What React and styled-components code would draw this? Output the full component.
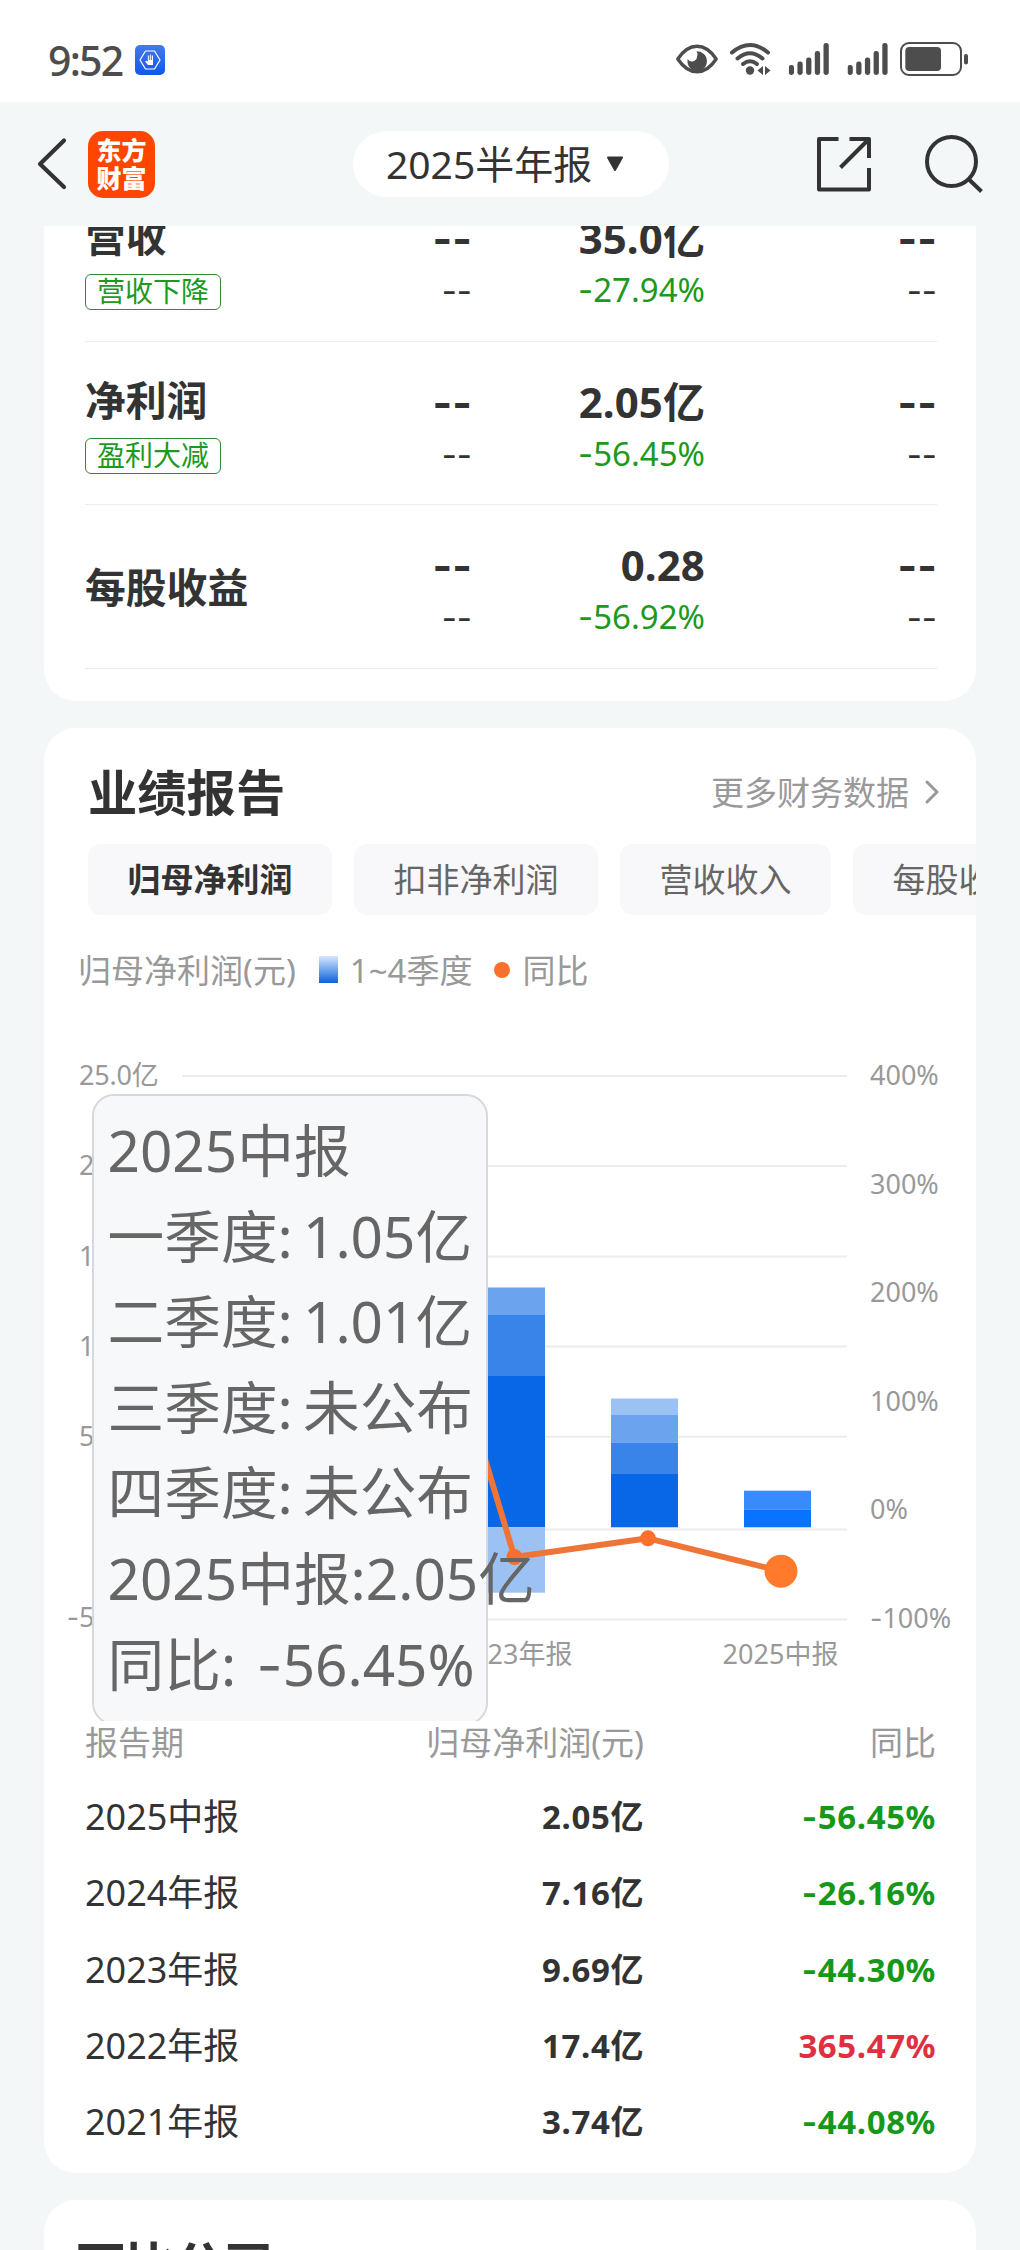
import React from 'react'
import styled, { createGlobalStyle } from 'styled-components'

const GlobalStyle = createGlobalStyle`
    * {
        box-sizing: border-box;
    }
    body {
        margin: 0;
        background: #f3f7f8;
        color: #333;
        font-family: "Noto Sans", "Noto Sans CJK SC", sans-serif;
    }
`
const Screen = styled.div`
    width: 1020px;
    height: 2250px;
    display: flex;
    flex-direction: column;
    overflow: hidden;
    background: #f3f7f8;
`
const StatusBar = styled.div`
    flex: none;
    height: 102px;
    padding: 18px 51px 0 48px;
    display: flex;
    align-items: center;
    justify-content: space-between;
    background: #fff;
`
const StatusLeft = styled.div`
    display: flex;
    align-items: center;
    gap: 12px;
`
const Clock = styled.span`
    width: 75px;
    font-size: 41px;
    line-height: 40px;
    font-weight: 500;
    letter-spacing: -1.8px;
    color: #4d4d4d;
`
const Header = styled.header`
    flex: none;
    height: 124px;
    padding: 0 36px 0 37px;
    display: grid;
    grid-template-columns: 316px 316px 1fr;
    align-items: center;
`
const HeaderLeft = styled.div`
    display: flex;
    align-items: center;
    gap: 20px;
`
const Logo = styled.div`
    width: 67px;
    height: 67px;
    padding-top: 4px;
    border-radius: 15px;
    background: #ff4600;
    color: #fff;
    font-family: "Noto Sans CJK SC", sans-serif;
    font-size: 25px;
    line-height: 28px;
    font-weight: 900;
    text-align: center;
`
const PeriodPicker = styled.button`
    height: 66px;
    padding: 0 0 0 33px;
    border: 0;
    border-radius: 33px;
    background: #fff;
    display: flex;
    align-items: center;
    gap: 14px;
    font-family: inherit;
    font-size: 39px;
    line-height: 60px;
    color: #333;
`
const HeaderActions = styled.div`
    display: flex;
    justify-content: flex-end;
    align-items: center;
    gap: 52px;
`
const Content = styled.main`
    flex: 1;
    min-height: 0;
    padding: 0 44px;
    overflow: hidden;
    display: flex;
    flex-direction: column;
    gap: 27px;
`
const Card = styled.section`
    flex: none;
    height: ${(props) => props.$height}px;
    border-radius: ${(props) => props.$cut ? "0 0 32px 32px" : "32px"};
    background: #fff;
    overflow: hidden;
`
/* the list is scrolled under the header, so its first row starts above the card */
const MetricList = styled.div`
    margin: -48px 39px 0 41px;
`
const MetricRow = styled.div`
    height: ${(props) => props.$height}px;
    border-bottom: 1px solid #ececec;
    display: grid;
    grid-template-columns: 387px 233px 1fr;
`
const MetricLabel = styled.div`
    grid-row: 1;
    grid-column: 1;
    padding-top: ${(props) => props.$single ? "53px" : "29px"};
    font-size: 40.8px;
    line-height: 58px;
    font-weight: 700;
`
const Tag = styled.div`
    width: 136px;
    height: 36px;
    margin-top: 9px;
    border: 1px solid #2f8a35;
    border-radius: 6px;
    color: #1d991d;
    font-size: 28px;
    line-height: 33px;
    font-weight: 400;
    text-align: center;
    white-space: nowrap;
`
const MetricCell = styled.div`
    grid-row: 1;
    grid-column: ${(props) => props.$col};
    padding-top: 31px;
    text-align: right;
    justify-self: end;
`
const MetricValue = styled.div`
    font-size: 42px;
    line-height: 58px;
    font-weight: 700;
    letter-spacing: 0.1px;
`
const MetricRate = styled.div`
    font-size: 33px;
    line-height: 45px;
    color: ${(props) => props.$empty ? "#333" : "#1d991d"};
`
const Sign = styled.span`
    font-family: Inter, sans-serif;
`
const CardHead = styled.div`
    height: 116px;
    padding: 12px 36px 0 ${(props) => props.$indent}px;
    display: flex;
    align-items: center;
    justify-content: space-between;
`
const CardTitle = styled.h2`
    margin: 0;
    font-size: 49.3px;
    line-height: 70px;
    font-weight: 700;
`
const MoreLink = styled.a`
    display: flex;
    align-items: center;
    gap: 15px;
    margin-top: -3px;
    font-size: 33px;
    color: #999;
`
const Tabs = styled.div`
    padding-left: 44px;
    display: flex;
    gap: 22px;
`
const Tab = styled.button`
    flex: none;
    height: 71px;
    padding: 0 39.5px 3px;
    border: 0;
    border-radius: 13px;
    background: #f8f8fa;
    font-family: inherit;
    font-size: 33px;
    font-weight: ${(props) => props.$active ? 700 : 400};
    color: ${(props) => props.$active ? "#333" : "#666"};
`
const Legend = styled.div`
    height: 111px;
    padding: 0 0 4px 34px;
    display: flex;
    align-items: center;
    font-size: 33px;
    color: #999;
`
const BarKey = styled.i`
    width: 19px;
    height: 27px;
    margin: 2px 12px 0 23px;
    background: linear-gradient(#d8e7fc, #0a62e0);
`
const LineKey = styled.i`
    width: 16px;
    height: 16px;
    margin: 2px 12px 0 22px;
    border-radius: 50%;
    background: #fb702a;
`
const ChartBox = styled.div`
    position: relative;
    height: 695px;
    overflow: hidden;
`
const ChartSvg = styled.svg`
    display: block;
    font-size: 27px;
    fill: #999;
`
const Tooltip = styled.div`
    position: absolute;
    left: 47.5px;
    top: 68px;
    width: 396px;
    height: 631px;
    padding: 12px 0 0 14px;
    border: 2px solid #d5d9dd;
    border-radius: 22px;
    background: #f7f8fa;
    color: #666;
    font-size: 56.7px;
    line-height: 85.6px;
    white-space: pre;
    word-spacing: -4.5px;
`
const Table = styled.div`
    padding: 0 40px 0 41px;
`
const TableRow = styled.div`
    height: ${(props) => props.$head ? 58 : 76.3}px;
    padding-bottom: ${(props) => props.$head ? 14 : 0}px;
    display: grid;
    grid-template-columns: 1fr 301px 292px;
    align-items: center;
    font-size: ${(props) => props.$head ? 33 : 36}px;
    line-height: ${(props) => props.$head ? 32 : 50}px;
    color: ${(props) => props.$head ? "#999" : "#333"};
`
const HeadCell = styled.span`
    text-align: ${(props) => props.$right ? "right" : "left"};
`
const Figure = styled.span`
    font-size: 33px;
    font-weight: 700;
    letter-spacing: 0.6px;
    text-align: right;
    color: ${(props) => props.$color || "#333"};
`

const metrics = [
    { label: '营收', tag: '营收下降', value: '35.0亿', rate: '-27.94%', height: 164 },
    { label: '净利润', tag: '盈利大减', value: '2.05亿', rate: '-56.45%', height: 163 },
    { label: '每股收益', value: '0.28', rate: '-56.92%', height: 164 },
]
const tabs = ['归母净利润', '扣非净利润', '营收收入', '每股收益']
const reports = [
    { period: '2025中报', profit: '2.05亿', rate: '-56.45%' },
    { period: '2024年报', profit: '7.16亿', rate: '-26.16%' },
    { period: '2023年报', profit: '9.69亿', rate: '-44.30%' },
    { period: '2022年报', profit: '17.4亿', rate: '365.47%' },
    { period: '2021年报', profit: '3.74亿', rate: '-44.08%' },
]
const tips = [
    '2025中报',
    '一季度: 1.05亿',
    '二季度: 1.01亿',
    '三季度: 未公布',
    '四季度: 未公布',
    '2025中报:2.05亿',
]

// chart coordinates: x from the card's left edge, y from the chart's top
const gridLines = [50, 140, 230.5, 320.5, 410.7, 503.6, 593.6]
const leftTicks = [
    ['25.0亿', 59], ['20.0亿', 149], ['15.0亿', 239.5], ['10.0亿', 329.7],
    ['5.00亿', 420], ['-5.00亿', 601],
]
const rightTicks = [
    ['400%', 59], ['300%', 167.6], ['200%', 276.4], ['100%', 385], ['0%', 493.4], ['-100%', 602],
]
const bars = [
    { x: 434, parts: [[261.5, 288.3, '#6ba3ef'], [288.3, 350, '#3984e8'], [350, 501.3, '#0767e6'], [501.3, 566.7, '#9cc2f4']] },
    { x: 567, parts: [[372.5, 388.5, '#9cc2f4'], [388.5, 416.5, '#6ba3ef'], [416.5, 448, '#3984e8'], [448, 501.3, '#0767e6']] },
    { x: 700, parts: [[464.7, 483.5, '#388bff'], [483.5, 501.3, '#0773ff']] },
]

function Rate({ text }) {
    return text[0] === '-' ? <><Sign>-</Sign>{text.slice(1)}</> : text
}

function Tick({ text }) {
    return text[0] === '-' ? <><tspan fontFamily="Inter">-</tspan>{text.slice(1)}</> : text
}

function SignalIcon() {
    const tops = [23, 19.5, 15.5, 9, 1]
    return (
        <svg width="41" height="34" viewBox="0 0 41 34">
            {tops.map((top, i) => (
                <rect key={i} x={i * 8.7} y={top} width="5.3" height={33 - top} rx="2.4" fill="#4d4d4d" />
            ))}
        </svg>
    )
}

function GuardIcon() {
    return (
        <svg width="30" height="30" viewBox="0 0 30 30">
            <defs>
                <linearGradient id="guard" x1="0" y1="0" x2="0" y2="1">
                    <stop offset="0" stopColor="#4479ee" />
                    <stop offset="1" stopColor="#1257ea" />
                </linearGradient>
            </defs>
            <rect width="30" height="30" rx="5" fill="url(#guard)" />
            <path d="M10.500 6h9L25 15l-5.500 9h-9L5 15z" fill="none" stroke="#fff" strokeWidth="1.200" strokeLinejoin="round" />
            <path d="M12.800 16.500v-6h1V15h1V9.500h1V15h1v-4.500h1.200V20h-5l-3-3.500 1-.8z" fill="#fff" />
        </svg>
    )
}

function StatusIcons() {
    return (
        <svg width="297" height="40" viewBox="671 40 297 40">
            <path d="M676.800 59C688 42 704 42 715.200 59C704 76 688 76 676.800 59Z" fill="none" stroke="#4d4d4d" strokeWidth="3.400" strokeLinejoin="round" />
            <path d="M695.500 51.200a9.700 10 0 1 1-8.800 7.800a5 5 0 0 0 9.300-2.500a5 5 0 0 0-.5-5.300z" fill="#4d4d4d" />
            <g fill="none" stroke="#4d4d4d" strokeWidth="4" strokeLinecap="round">
                <path d="M731 52.500Q749 37.500 767 52.500" />
                <path d="M736.500 58.500Q749 48 761.500 58.500" />
                <path d="M742 64Q749 58.500 756 64" />
            </g>
            <circle cx="749" cy="70.500" r="4.200" fill="#4d4d4d" />
            <path d="M762 66v9l-5.500-4.500zM764 66v9l5.500-4.500z" fill="#4d4d4d" />
            <g transform="translate(787.700 42)"><SignalIcon /></g>
            <g transform="translate(846.500 42)"><SignalIcon /></g>
            <rect x="900" y="43" width="60" height="32" rx="8" fill="none" stroke="#4d4d4d" strokeWidth="2" />
            <rect x="904.300" y="47" width="35.700" height="24" rx="4" fill="#4d4d4d" />
            <rect x="963" y="54" width="4" height="10.500" rx="2" fill="#4d4d4d" />
        </svg>
    )
}

function ProfitChart() {
    return (
        <ChartBox>
            <ChartSvg width="932" height="695" viewBox="0 0 932 695">
                {gridLines.map((y) => (
                    <line key={y} x1="138" x2="803" y1={y} y2={y} stroke="#ececee" strokeWidth="2" />
                ))}
                {leftTicks.map(([text, y]) => (
                    <text key={text} x="114.500" y={y} textAnchor="end" letterSpacing="-0.200"><Tick text={text} /></text>
                ))}
                {rightTicks.map(([text, y]) => (
                    <text key={text} x="826" y={y}><Tick text={text} /></text>
                ))}
                {bars.map((bar) => bar.parts.map(([top, bottom, color]) => (
                    <rect key={bar.x + color} x={bar.x} y={top} width="67" height={bottom - top} fill={color} />
                )))}
                <polyline points="337,87 470.500,531 604,512.300 737,545.200" fill="none" stroke="#ef7537" strokeWidth="6" strokeLinejoin="round" />
                <circle cx="470.500" cy="531" r="8" fill="#f86f2d" />
                <circle cx="604" cy="512.300" r="8" fill="#fb702a" />
                <circle cx="737" cy="545.200" r="16.500" fill="#ff7a2a" />
                <text x="470.500" y="638" textAnchor="middle">2023年报</text>
                <text x="736.500" y="638" textAnchor="middle">2025中报</text>
            </ChartSvg>
            <Tooltip>
                {tips.map((tip) => (
                    <div key={tip}>{tip}</div>
                ))}
                <div>同比:  <Rate text="-56.45%" /></div>
            </Tooltip>
        </ChartBox>
    )
}

function App() {
    return (
        <Screen>
            <GlobalStyle />
            <StatusBar>
                <StatusLeft>
                    <Clock>9:52</Clock>
                    <GuardIcon />
                </StatusLeft>
                <StatusIcons />
            </StatusBar>
            <Header>
                <HeaderLeft>
                    <svg width="31" height="54" viewBox="0 0 31 54">
                        <path d="M27 3.500L3 27L27 50" fill="none" stroke="#333" strokeWidth="4.200" strokeLinecap="round" strokeLinejoin="round" />
                    </svg>
                    <Logo>东方<br />财富</Logo>
                </HeaderLeft>
                <PeriodPicker>
                    2025半年报
                    <svg width="18" height="16" viewBox="0 0 18 16">
                        <path d="M2 1.500h14L9 14z" fill="#333" stroke="#333" strokeWidth="2" strokeLinejoin="round" />
                    </svg>
                </PeriodPicker>
                <HeaderActions>
                    <svg width="56" height="56" viewBox="0 0 56 56" fill="none" stroke="#333" strokeWidth="4" strokeLinejoin="round">
                        <path d="M22.500 3H3v50.500h50V32" />
                        <path d="M33.500 3H53v19M53 3L24.500 31.500" />
                    </svg>
                    <svg width="60" height="60" viewBox="0 0 60 60" fill="none" stroke="#333" strokeWidth="4">
                        <circle cx="27.500" cy="27.500" r="24.500" />
                        <path d="M44.500 45L57.500 57.500" />
                    </svg>
                </HeaderActions>
            </Header>
            <Content>
                <Card $height={475} $cut>
                    <MetricList>
                        {metrics.map((item) => (
                            <MetricRow key={item.label} $height={item.height}>
                                <MetricLabel $single={!item.tag}>
                                    {item.label}
                                    {item.tag && <Tag>{item.tag}</Tag>}
                                </MetricLabel>
                                <MetricCell $col={1}>
                                    <MetricValue><Sign>--</Sign></MetricValue>
                                    <MetricRate $empty><Sign>--</Sign></MetricRate>
                                </MetricCell>
                                <MetricCell $col={2}>
                                    <MetricValue>{item.value}</MetricValue>
                                    <MetricRate><Rate text={item.rate} /></MetricRate>
                                </MetricCell>
                                <MetricCell $col={3}>
                                    <MetricValue><Sign>--</Sign></MetricValue>
                                    <MetricRate $empty><Sign>--</Sign></MetricRate>
                                </MetricCell>
                            </MetricRow>
                        ))}
                    </MetricList>
                </Card>
                <Card $height={1445}>
                    <CardHead $indent={44}>
                        <CardTitle>业绩报告</CardTitle>
                        <MoreLink>
                            更多财务数据
                            <svg width="16" height="26" viewBox="0 0 16 26">
                                <path d="M3 4l10 10L3 24" fill="none" stroke="#999" strokeWidth="3" strokeLinecap="round" strokeLinejoin="round" />
                            </svg>
                        </MoreLink>
                    </CardHead>
                    <Tabs>
                        {tabs.map((tab, i) => (
                            <Tab key={tab} $active={i === 0}>{tab}</Tab>
                        ))}
                    </Tabs>
                    <Legend>
                        归母净利润(元)<BarKey />1~4季度<LineKey />同比
                    </Legend>
                    <ProfitChart />
                    <Table>
                        <TableRow $head>
                            <HeadCell>报告期</HeadCell>
                            <HeadCell $right>归母净利润(元)</HeadCell>
                            <HeadCell $right>同比</HeadCell>
                        </TableRow>
                        {reports.map((row) => (
                            <TableRow key={row.period}>
                                <span>{row.period}</span>
                                <Figure>{row.profit}</Figure>
                                <Figure $color={row.rate[0] === '-' ? '#16991a' : '#e03040'}><Rate text={row.rate} /></Figure>
                            </TableRow>
                        ))}
                    </Table>
                </Card>
                <Card $height={300}>
                    <CardHead $indent={32}>
                        <CardTitle>可比公司</CardTitle>
                    </CardHead>
                </Card>
            </Content>
        </Screen>
    )
}

export default App
